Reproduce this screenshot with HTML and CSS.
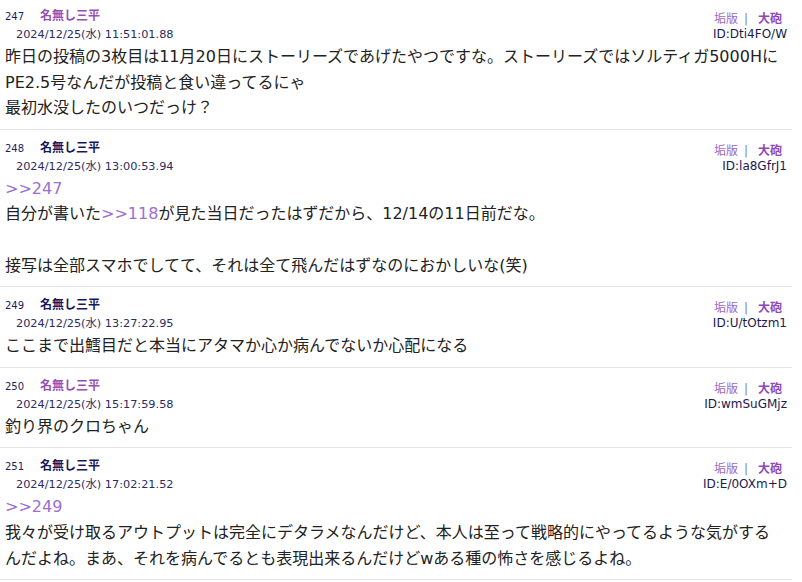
FILE: index.html
```html
<!DOCTYPE html>
<html lang="ja">
<head>
    <meta charset="UTF-8">
    <meta name="viewport" content="width=device-width, initial-scale=1.0">
    <title>スレッド</title>
    <link rel="stylesheet" href="styles.css">
</head>
<body>
    <!-- レス一覧 -->
    <div class="thread">
        <article class="post">
            <div class="post-head">
                <div class="post-info">
                    <div class="post-title"><span class="post-num">247</span><a class="post-name visited" href="#">名無し三平</a></div>
                    <div class="post-date">2024/12/25(水) 11:51:01.88</div>
                </div>
                <div class="post-meta">
                    <div class="post-tools"><a class="tool-ban" href="#">垢版</a><span class="tool-sep">|</span><a class="tool-cannon" href="#">大砲</a></div>
                    <div class="post-id">ID:Dti4FO/W</div>
                </div>
            </div>
            <div class="message">昨日の投稿の3枚目は11月20日にストーリーズであげたやつですな。ストーリーズではソルティガ5000HにPE2.5号なんだが投稿と食い違ってるにゃ<br>最初水没したのいつだっけ？</div>
        </article>

        <article class="post">
            <div class="post-head">
                <div class="post-info">
                    <div class="post-title"><span class="post-num">248</span><a class="post-name" href="#">名無し三平</a></div>
                    <div class="post-date">2024/12/25(水) 13:00:53.94</div>
                </div>
                <div class="post-meta">
                    <div class="post-tools"><a class="tool-ban" href="#">垢版</a><span class="tool-sep">|</span><a class="tool-cannon" href="#">大砲</a></div>
                    <div class="post-id">ID:la8GfrJ1</div>
                </div>
            </div>
            <div class="message"><a class="anchor" href="#">&gt;&gt;247</a><br>自分が書いた<a class="anchor" href="#">&gt;&gt;118</a>が見た当日だったはずだから、12/14の11日前だな。<br><br>接写は全部スマホでしてて、それは全て飛んだはずなのにおかしいな(笑)</div>
        </article>

        <article class="post">
            <div class="post-head">
                <div class="post-info">
                    <div class="post-title"><span class="post-num">249</span><a class="post-name" href="#">名無し三平</a></div>
                    <div class="post-date">2024/12/25(水) 13:27:22.95</div>
                </div>
                <div class="post-meta">
                    <div class="post-tools"><a class="tool-ban" href="#">垢版</a><span class="tool-sep">|</span><a class="tool-cannon" href="#">大砲</a></div>
                    <div class="post-id">ID:U/tOtzm1</div>
                </div>
            </div>
            <div class="message">ここまで出鱈目だと本当にアタマか心か病んでないか心配になる</div>
        </article>

        <article class="post">
            <div class="post-head">
                <div class="post-info">
                    <div class="post-title"><span class="post-num">250</span><a class="post-name visited" href="#">名無し三平</a></div>
                    <div class="post-date">2024/12/25(水) 15:17:59.58</div>
                </div>
                <div class="post-meta">
                    <div class="post-tools"><a class="tool-ban" href="#">垢版</a><span class="tool-sep">|</span><a class="tool-cannon" href="#">大砲</a></div>
                    <div class="post-id">ID:wmSuGMjz</div>
                </div>
            </div>
            <div class="message">釣り界のクロちゃん</div>
        </article>

        <article class="post">
            <div class="post-head">
                <div class="post-info">
                    <div class="post-title"><span class="post-num">251</span><a class="post-name" href="#">名無し三平</a></div>
                    <div class="post-date">2024/12/25(水) 17:02:21.52</div>
                </div>
                <div class="post-meta">
                    <div class="post-tools"><a class="tool-ban" href="#">垢版</a><span class="tool-sep">|</span><a class="tool-cannon" href="#">大砲</a></div>
                    <div class="post-id">ID:E/0OXm+D</div>
                </div>
            </div>
            <div class="message"><a class="anchor" href="#">&gt;&gt;249</a><br>我々が受け取るアウトプットは完全にデタラメなんだけど、本人は至って戦略的にやってるような気がするんだよね。まあ、それを病んでるとも表現出来るんだけどwある種の怖さを感じるよね。</div>
        </article>
    </div>
</body>
</html>
```

FILE: styles.css
```css
/* 基础样式 */
* {
    box-sizing: border-box;
    margin: 0;
    padding: 0;
}

body {
    font-family: "DejaVu Sans", "Noto Sans CJK JP", sans-serif;
    background: #fff;
    color: #222;
}

a {
    text-decoration: none;
}

/* レス */
.thread {
    width: 792px;
}

.post {
    padding: 7px 5px 8px;
    border-bottom: 1px solid #e4e4e4;
}

.post:first-child {
    padding-top: 5px;
}

.post-head {
    display: flex;
    justify-content: space-between;
    align-items: flex-start;
}

.post-title {
    line-height: 20px;
    height: 20px;
}

.post-num {
    font-size: 10px;
    color: #1c1c5c;
}

.post-name {
    margin-left: 16px;
    font-size: 12px;
    font-weight: bold;
    color: #17175e;
}

.post-name.visited {
    color: #9450b8;
}

.post-date {
    padding-left: 11px;
    font-size: 11.3px;
    line-height: 19px;
    color: #2b2b5e;
}

/* 右側 */
.post-meta {
    padding-top: 7px;
    text-align: right;
    font-size: 12px;
    line-height: 15px;
}

.post-tools {
    padding-right: 5px;
}

.tool-ban {
    color: #9c6ac9;
}

.tool-sep {
    margin: 0 10px 0 6px;
    color: #85859c;
}

.tool-cannon {
    font-weight: bold;
    color: #8e48b8;
}

.post-id {
    color: #1a1a4e;
}

/* 本文 */
.message {
    padding-right: 6px;
    font-size: 16px;
    line-height: 25.6px;
    color: #222;
}

.anchor {
    color: #9b6fd3;
}
```
